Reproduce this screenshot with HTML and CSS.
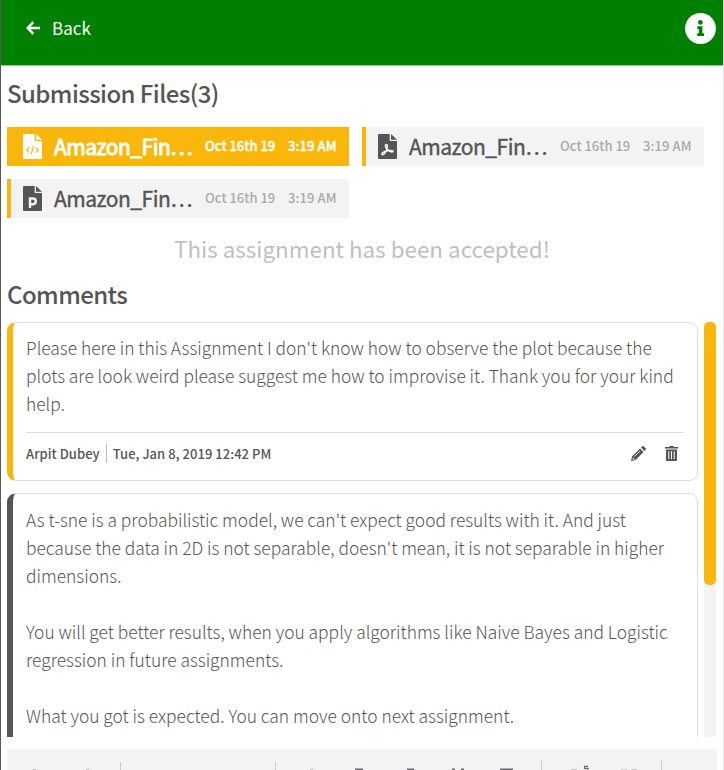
FILE: index.html
```html
<!DOCTYPE html>
<html lang="en">
<head>
<meta charset="utf-8">
<title>Submission Files</title>
<link rel="stylesheet" href="styles.css">
</head>
<body>
<div class="panel">
  <header class="topbar">
    <a class="back"><svg width="14" height="14" viewBox="0 0 14 14" fill="none" stroke="#fff" stroke-width="2.5"><path d="M7.3 1.2 1.7 7l5.6 5.8M2 7h12"/></svg><span>Back</span></a>
    <svg class="info" width="31" height="31" viewBox="0 0 31 31"><circle cx="15.5" cy="15.5" r="15.4" fill="#fff"/><g fill="#008000"><circle cx="15.4" cy="9.4" r="2.4"/><path d="M12.400 13.2h5v7h1.600v2.800h-6.800v-2.800h1.600v-4.200h-1.400z"/></g></svg>
  </header>
  <main class="content">
    <h2 class="title files-title">Submission Files(3)</h2>
    <div class="files">
      <div class="file active">
        <svg class="icon" width="19" height="25" viewBox="0 0 19 25"><path fill="#fff" d="M1 0h10.700v7H19v17a1 1 0 0 1-1 1H1a1 1 0 0 1-1-1V1a1 1 0 0 1 1-1zM13 0l6 5.800h-6z"/><path fill="none" stroke="#fab70b" stroke-width="1.200" d="M6.300 13.400 3.600 16l2.700 2.600M12.700 13.400l2.700 2.600-2.700 2.600M10.500 11.800l-2.200 8.400"/></svg>
        <span class="name">Amazon_Fin…</span><span class="date">Oct 16th 19</span><span class="time">3:19 AM</span>
      </div>
      <div class="file">
        <svg class="icon" width="19" height="25" viewBox="0 0 19 25"><path fill="#555" d="M1 0h10.700v7H19v17a1 1 0 0 1-1 1H1a1 1 0 0 1-1-1V1a1 1 0 0 1 1-1zM13 0l6 5.800h-6z"/><path fill="none" stroke="#f3f3f3" stroke-width="1.500" d="M8.300 10.500c1.500 0 1.300 2.500.3 5-1 2.600-2.700 5.200-4 5.200-1.600 0-.8-2 1.800-3 3-1.200 8-1.800 8.600-.7.5 1.300-2.200 1.200-4-.4-1.800-1.300-3.800-3.400-3.600-5.200.1-.6.4-.9.900-.9z"/></svg>
        <span class="name">Amazon_Fin…</span><span class="date">Oct 16th 19</span><span class="time">3:19 AM</span>
      </div>
      <div class="file">
        <svg class="icon" width="19" height="25" viewBox="0 0 19 25"><path fill="#555" d="M1 0h10.700v7H19v17a1 1 0 0 1-1 1H1a1 1 0 0 1-1-1V1a1 1 0 0 1 1-1zM13 0l6 5.800h-6z"/><path fill="none" stroke="#f3f3f3" stroke-width="2.400" d="M7 22v-9.500h3a2.600 2.600 0 0 1 0 5.700H7"/></svg>
        <span class="name">Amazon_Fin…</span><span class="date">Oct 16th 19</span><span class="time">3:19 AM</span>
      </div>
    </div>
    <p class="status"><span>This assignment has been accepted!</span></p>
    <h2 class="title comments-title">Comments</h2>
    <div class="thread">
      <div class="comments">
        <article class="comment mine">
          <p class="text">Please here in this Assignment I don't know how to observe the plot because the<br>plots are look weird please suggest me how to improvise it. Thank you for your kind<br>help.</p>
          <footer class="meta">
            <span class="author">Arpit Dubey</span><span class="stamp">Tue, Jan 8, 2019 12:42 PM</span>
            <svg class="edit" width="15" height="15" viewBox="0 0 15 15" fill="#555"><path d="M0 15l1-4.600L9 2.500l3.600 3.600-8 7.900zM10 1.600 11.100.5c.6-.6 1.200-.6 1.800 0l1.600 1.600c.6.6.6 1.200 0 1.800l-1.100 1.200z"/><path d="M2 11.500l1.700 1.700-2 .6z" fill="#fff"/><path d="M3.500 10.500 9 5" stroke="#fff" stroke-width=".8"/></svg>
            <svg class="trash" width="13" height="15" viewBox="0 0 13 15" fill="#555"><path d="M0 1h4l.6-1h3.800L9 1h4v1.500H0zM1 3.500h11V14a1 1 0 0 1-1 1H2a1 1 0 0 1-1-1z"/><path d="M3.800 5.200v8M6.500 5.200v8M9.200 5.200v8" stroke="#fff" stroke-width="1"/></svg>
          </footer>
        </article>
        <article class="comment reply">
          <p class="text">As t-sne is a probabilistic model, we can't expect good results with it. And just<br>because the data in 2D is not separable, doesn't mean, it is not separable in higher<br>dimensions.<br><br>You will get better results, when you apply algorithms like Naive Bayes and Logistic<br>regression in future assignments.<br><br>What you got is expected. You can move onto next assignment.</p>
        </article>
      </div>
      <div class="track"><div class="thumb"></div></div>
    </div>
    <div class="toolbar">
      <svg width="709" height="21" viewBox="0 0 709 21"><path stroke="#ccc" d="M113.500 13v8M268.500 13v8M534.500 12v9M654.500 12v9"/><path stroke="#bbb" d="M26 20.500h3M79 20.500h3M303 20.500h3"/><g stroke="#666a70" stroke-width="1.500"><path d="M348 20.200h8M400 20.200h7M445 20.200h3M454 20.200h3M493 20.200h13"/><path d="M581 17.300h-3.500v2h3.500v1.700" fill="none" stroke-width="1.200"/></g><path stroke="#ccc" d="M564 20.500h6M614 20.500h6M624 20.500h6"/></svg>
    </div>
  </main>
</div>
</body>
</html>
```
FILE: styles.css
```css
* { box-sizing: border-box; }
body { margin: 0; background: #fff; color: #555; font-family: "Noto Sans CJK SC", "Noto Sans", sans-serif; }
svg { display: block; flex: none; }
h2, p { margin: 0; white-space: nowrap; }
.panel { height: 770px; overflow: hidden; border-left: 1px solid #5c5558; border-right: 1px solid #eee; }
.topbar { height: 66px; background: #008000; border-bottom: 1px solid #8fc98f; display: flex; justify-content: space-between; padding: 13px 7px 0 25px; }
.back { display: flex; height: 30px; align-items: center; gap: 12px; color: #fff; font-size: 17px; line-height: 30px; }
.back span { margin-top: -1px; }
.content { padding: 0 6px; display: flex; flex-direction: column; }
.title { font-size: 24px; font-weight: 500; line-height: 34px; letter-spacing: -0.58px; }
.files-title { margin-top: 10px; }
.files { margin-top: 17px; display: grid; grid-template-columns: 342px 342px; gap: 13px; }
.file { height: 39px; display: flex; align-items: center; background: #f3f3f3; border-left: 4px solid #fab70b; padding-left: 12px; white-space: nowrap; }
.active { background: #fab70b; color: #fff; }
.name { width: 139px; margin-left: 12px; font-size: 21px; font-weight: 400; line-height: 39px; letter-spacing: -0.5px; -webkit-text-stroke: 0.4px currentColor; }
.date { width: 83px; margin-left: 12px; }
.date, .time { color: #aaa; font-size: 13px; font-weight: 500; line-height: 36px; margin-top: -1px; }
.time { letter-spacing: 0.1px; }
.active .date, .active .time { color: #fff; -webkit-text-stroke: 0.4px #fff; }
.active .name { -webkit-text-stroke-width: 0.9px; }
.status { margin-top: 13px; text-align: center; font-size: 22.4px; line-height: 34px; color: #bfbfbf; }
.comments-title { margin-top: 12px; }
.thread { height: 415px; margin-top: 11px; display: flex; justify-content: space-between; overflow: hidden; padding-right: 1px; }
.comments { width: 691px; }
.comment { border: 1px solid #ddd; border-left: 6px solid #fab70b; border-radius: 9px; padding: 12px 13px 0; }
.mine { height: 159px; padding-top: 11px; }
.reply { height: 300px; margin-top: 12px; border-left-color: #555; }
.text { font-size: 17.4px; font-weight: 300; line-height: 28px; }
.meta { margin-top: 14px; height: 41px; border-top: 1px solid #ddd; display: flex; align-items: center; font-size: 13px; font-weight: 500; white-space: nowrap; padding-right: 6px; }
.author { padding-right: 6px; border-right: 1px solid #bbb; line-height: 19px; letter-spacing: 0.05px; }
.stamp { margin-left: 6px; line-height: 19px; letter-spacing: 0.04px; }
.edit { margin-left: auto; }
.trash { margin-left: 19px; }
.track { width: 12px; background: #f3f3f3; border-radius: 5px 5px 0 0; }
.thumb { height: 263px; background: #fab70b; border-radius: 5px; }
.toolbar { margin-top: 12px; height: 21px; background: #f3f3f3; }
```
